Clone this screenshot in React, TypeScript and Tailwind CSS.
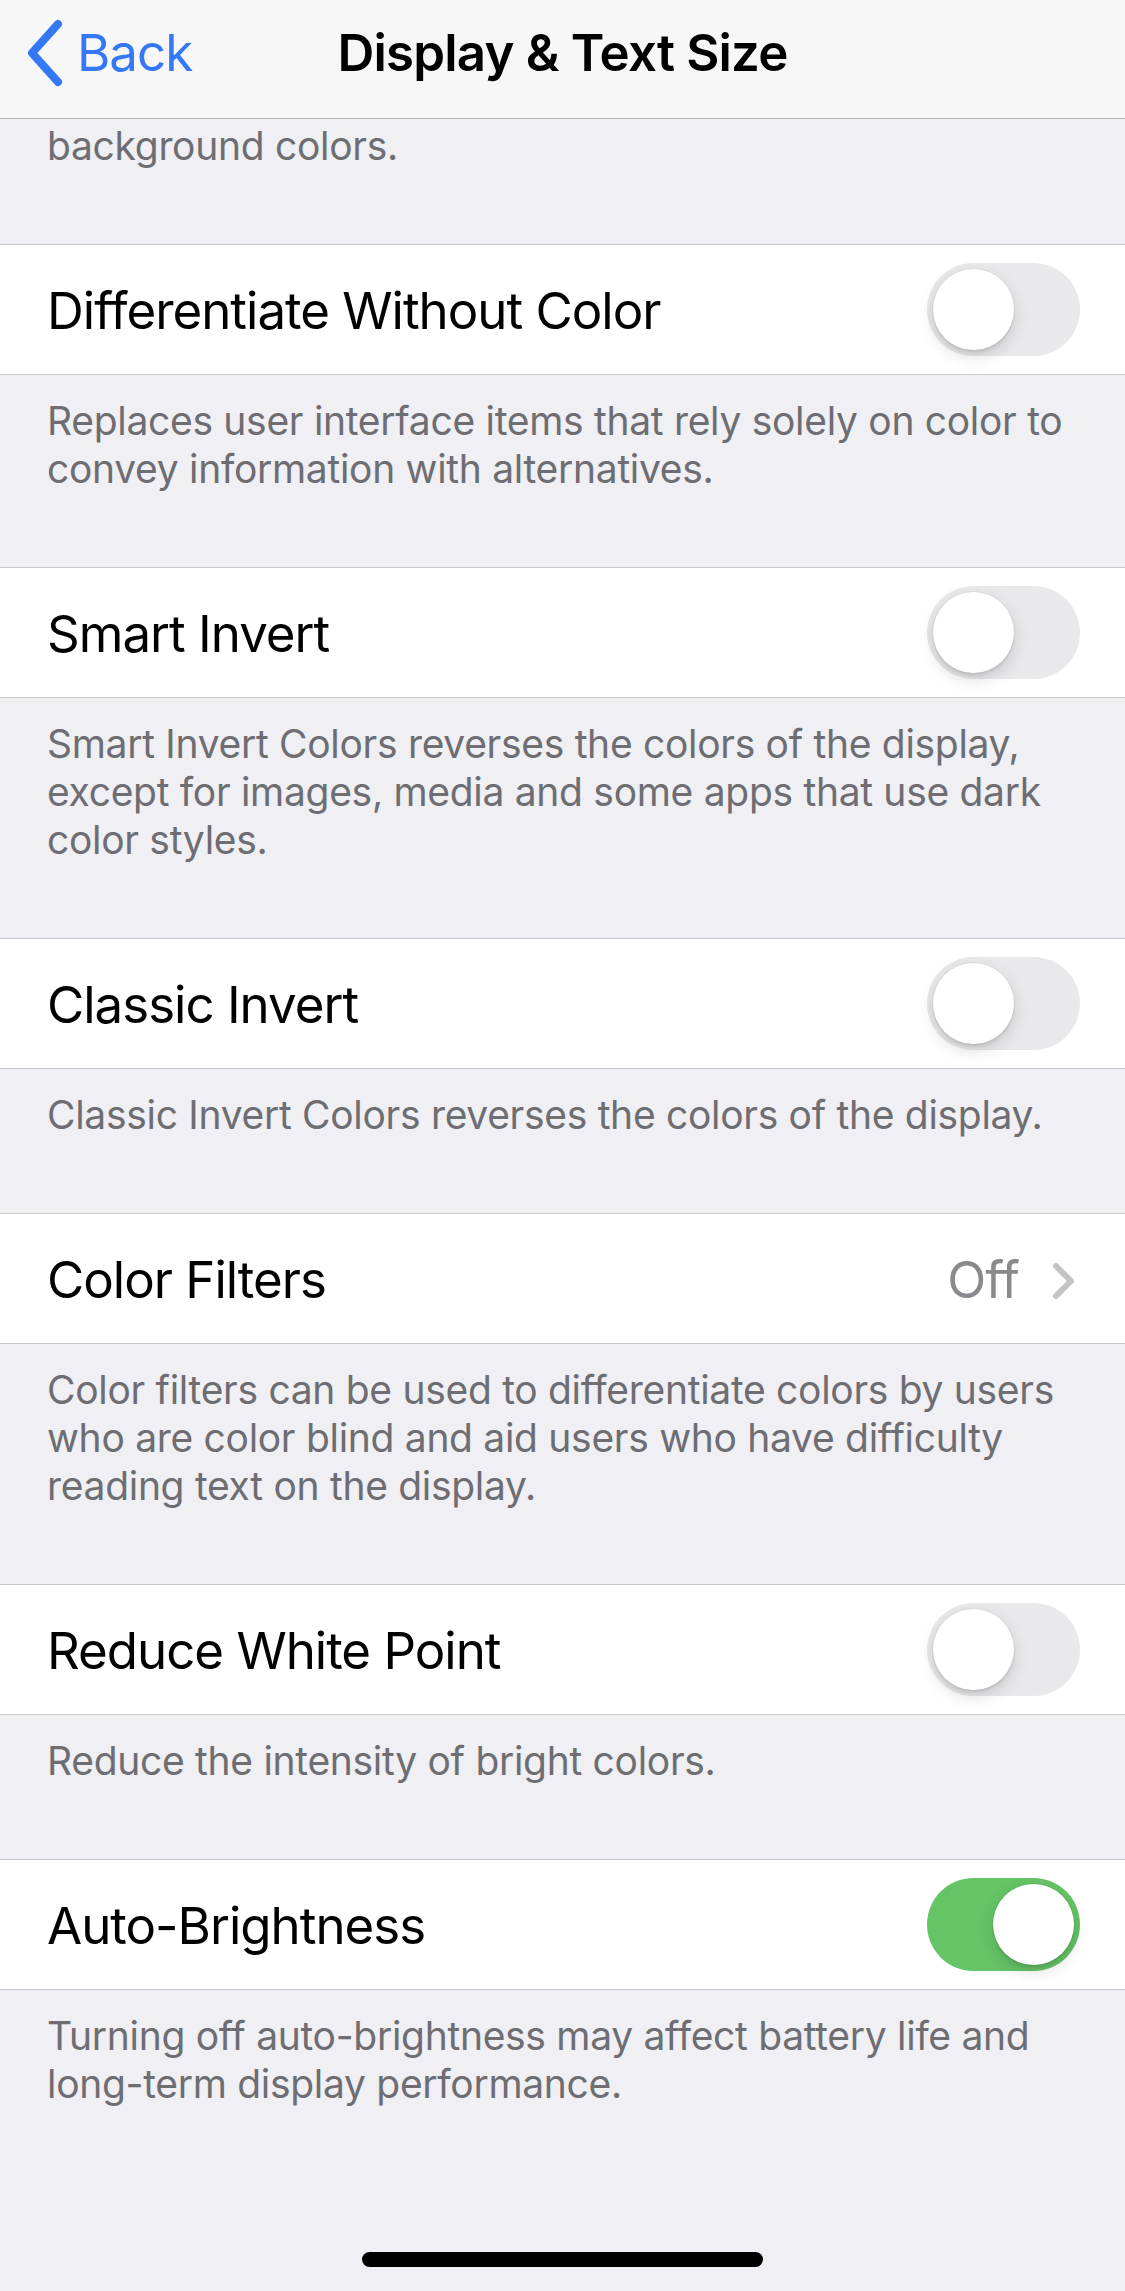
import React from "react";

const font = { fontFamily: '"Inter", "Liberation Sans", sans-serif' };

function Toggle({ on }: { on?: boolean }) {
  return (
    <div
      className={
        "flex h-[93px] w-[153px] shrink-0 items-center rounded-full p-[6px] " +
        (on ? "justify-end bg-[#65c466]" : "justify-start bg-[#e9e9eb]")
      }
    >
      <div className="h-[81px] w-[81px] rounded-full bg-white shadow-[0_6px_16px_rgba(0,0,0,0.15),0_3px_2px_rgba(0,0,0,0.06),0_0_0_1px_rgba(0,0,0,0.04)]" />
    </div>
  );
}

function Row({ label, children }: { label: string; children?: React.ReactNode }) {
  return (
    <div className="flex h-[131px] items-center justify-between border-y border-[#c8c7cc] bg-white pl-[47px] pr-[45px]">
      <span className="pt-[4px] text-[51px] tracking-[-1px] text-black">{label}</span>
      {children}
    </div>
  );
}

function Footer({ lines }: { lines: string[] }) {
  return (
    <div className="pl-[47px] pt-[22px] pb-[74px] text-[39px] leading-[48px] tracking-[-0.3px] text-[#6d6d72]">
      {lines.map((l, i) => (
        <div key={i} className="whitespace-nowrap">
          {l}
        </div>
      ))}
    </div>
  );
}

export default function App() {
  return (
    <div className="flex min-h-[2291px] w-full flex-col bg-[#efeff4]" style={font}>
      <div className="grid h-[119px] grid-cols-[1fr_auto_1fr] items-start border-b border-[#b7b7b9] bg-[#f7f7f8]">
        <div className="flex h-[106px] items-center pl-[25px] text-[#3478f6]">
          <svg width="40" height="68" viewBox="0 0 40 68" className="mr-[12px]">
            <path d="M33 5 L7 34 L33 63" fill="none" stroke="#3478f6" strokeWidth="8" strokeLinecap="round" strokeLinejoin="round" />
          </svg>
          <span className="text-[51px] tracking-[-1px]">Back</span>
        </div>
        <div className="flex h-[106px] items-center text-[51px] font-semibold tracking-[-0.8px] text-black">
          Display &amp; Text Size
        </div>
        <div />
      </div>

      <div className="pl-[47px] pt-[3px] pb-[74px] text-[39px] leading-[48px] tracking-[-0.3px] text-[#6d6d72]">
        background colors.
      </div>

      <Row label="Differentiate Without Color">
        <Toggle />
      </Row>
      <Footer
        lines={[
          "Replaces user interface items that rely solely on color to",
          "convey information with alternatives.",
        ]}
      />

      <Row label="Smart Invert">
        <Toggle />
      </Row>
      <Footer
        lines={[
          "Smart Invert Colors reverses the colors of the display,",
          "except for images, media and some apps that use dark",
          "color styles.",
        ]}
      />

      <Row label="Classic Invert">
        <Toggle />
      </Row>
      <Footer lines={["Classic Invert Colors reverses the colors of the display."]} />

      <Row label="Color Filters">
        <div className="flex items-center pt-[4px]">
          <span className="text-[51px] tracking-[-1px] text-[#8a8a8e]">Off</span>
          <svg width="26" height="40" viewBox="0 0 26 40" className="ml-[32px] mr-[3px]">
            <path d="M5 5 L20 20 L5 35" fill="none" stroke="#c4c4c7" strokeWidth="6" strokeLinecap="round" strokeLinejoin="round" />
          </svg>
        </div>
      </Row>
      <Footer
        lines={[
          "Color filters can be used to differentiate colors by users",
          "who are color blind and aid users who have difficulty",
          "reading text on the display.",
        ]}
      />

      <Row label="Reduce White Point">
        <Toggle />
      </Row>
      <Footer lines={["Reduce the intensity of bright colors."]} />

      <Row label="Auto-Brightness">
        <Toggle on />
      </Row>
      <Footer
        lines={[
          "Turning off auto-brightness may affect battery life and",
          "long-term display performance.",
        ]}
      />

      <div className="flex flex-1 items-end justify-center pb-[24px]">
        <div className="h-[15px] w-[401px] rounded-full bg-black" />
      </div>
    </div>
  );
}
